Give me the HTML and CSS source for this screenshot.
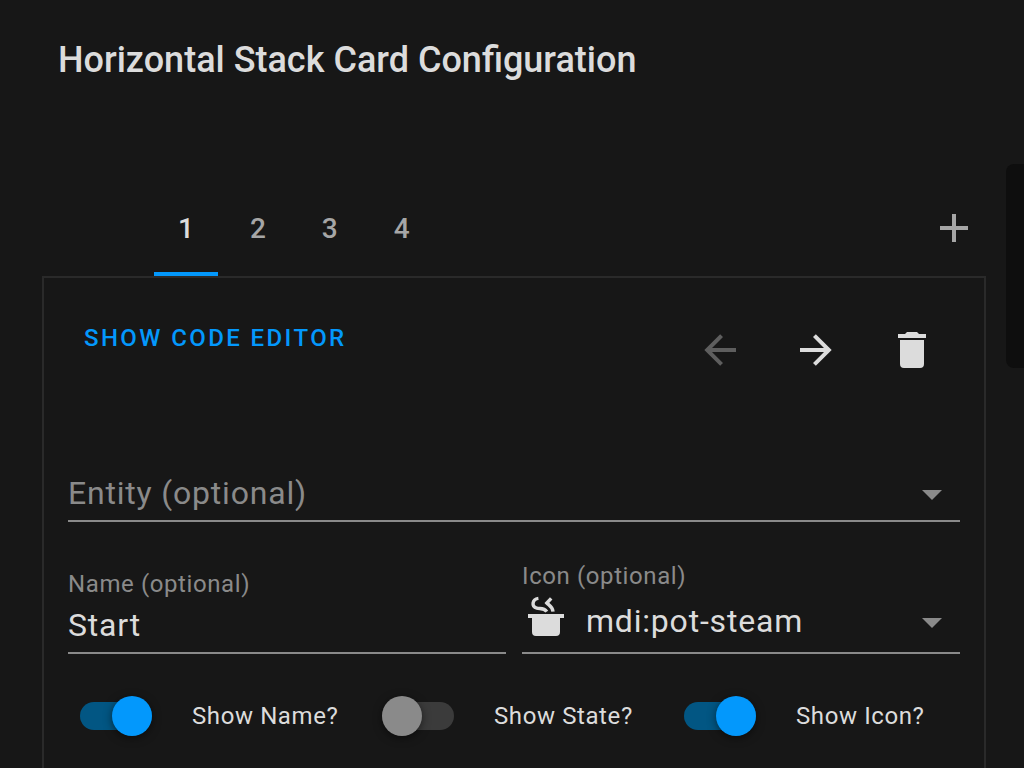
FILE: index.html
```html
<!DOCTYPE html>
<html lang="en">
<head>
<meta charset="utf-8">
<title>Horizontal Stack Card Configuration</title>
<link rel="stylesheet" href="styles.css">
</head>
<body>
<main class="dialog">
  <section class="editor">
    <h1 class="title">Horizontal Stack Card Configuration</h1>
    <div class="tabbar">
      <div class="tabs" role="tablist">
        <button class="tab tab-active" role="tab" aria-selected="true">1</button>
        <button class="tab" role="tab" aria-selected="false">2</button>
        <button class="tab" role="tab" aria-selected="false">3</button>
        <button class="tab" role="tab" aria-selected="false">4</button>
      </div>
      <button class="add" aria-label="Add card">
        <svg class="icon" viewBox="0 0 24 24"><path d="M19,13H13V19H11V13H5V11H11V5H13V11H19V13Z"/></svg>
      </button>
    </div>
    <form class="panel">
      <div class="toolbar">
        <button class="code-button" type="button">SHOW CODE EDITOR</button>
        <div class="actions">
          <button class="icon-button" type="button" aria-label="Move before" disabled>
            <svg class="icon" viewBox="0 0 24 24"><path d="M20,11V13H8L13.5,18.5L12.08,19.92L4.16,12L12.08,4.08L13.5,5.5L8,11H20Z"/></svg>
          </button>
          <button class="icon-button" type="button" aria-label="Move after">
            <svg class="icon" viewBox="0 0 24 24"><path d="M4,11V13H16L10.5,18.5L11.92,19.92L19.84,12L11.92,4.08L10.5,5.5L16,11H4Z"/></svg>
          </button>
          <button class="icon-button" type="button" aria-label="Delete card">
            <svg class="icon" viewBox="0 0 24 24"><path d="M19,4H15.5L14.5,3H9.5L8.5,4H5V6H19M6,19A2,2 0 0,0 8,21H16A2,2 0 0,0 18,19V7H6V19Z"/></svg>
          </button>
        </div>
      </div>
      <div class="field entity">
        <div class="control">
          <select class="value select placeholder" aria-label="Entity">
            <option>Entity (optional)</option>
          </select>
          <svg class="icon caret" viewBox="0 0 24 24"><path d="M7,10L12,15L17,10H7Z"/></svg>
        </div>
      </div>
      <div class="row">
        <div class="field">
          <label class="label" for="name">Name (optional)</label>
          <div class="control name-control">
            <input class="value" id="name" type="text" value="Start">
          </div>
        </div>
        <div class="field">
          <label class="label" for="icon">Icon (optional)</label>
          <div class="control icon-control">
            <svg class="icon pot" viewBox="0 0 24 24">
              <path d="M3,10H21V12H19V19A2,2 0 0,1 17,21H7A2,2 0 0,1 5,19V12H3Z"/>
              <path class="steam" d="M8.2,2.2C5,2.6 4.6,6.4 7.4,7.1C9,7.5 11,6.8 12.4,8.8M14.6,2.2L12.4,4.5C13.4,5.6 15.4,6.4 15.5,8.8"/>
            </svg>
            <select class="value select" id="icon">
              <option>mdi:pot-steam</option>
            </select>
            <svg class="icon caret" viewBox="0 0 24 24"><path d="M7,10L12,15L17,10H7Z"/></svg>
          </div>
        </div>
      </div>
      <div class="switches">
        <label class="switch"><input class="toggle" type="checkbox" checked>Show Name?</label>
        <label class="switch"><input class="toggle" type="checkbox">Show State?</label>
        <label class="switch"><input class="toggle" type="checkbox" checked>Show Icon?</label>
      </div>
    </form>
  </section>
  <aside class="preview"></aside>
</main>
</body>
</html>
```

FILE: styles.css
```css
* {
  box-sizing: border-box;
}

body {
  margin: 0;
  background: #171717;
  color: #dcdcdc;
  font-family: Roboto, "Liberation Sans", sans-serif;
}

button,
input,
select {
  margin: 0;
  padding: 0;
  border: 0;
  background: none;
  color: inherit;
  font: inherit;
  letter-spacing: inherit;
}

.dialog {
  display: flex;
  gap: 20px;
  min-height: 100vh;
}

.editor {
  display: flex;
  flex: 1;
  flex-direction: column;
  padding-left: 42px;
}

.preview {
  width: 18px;
  height: 204px;
  margin-top: 164px;
  border-radius: 8px 0 0 8px;
  background: #0e0e0e;
}

.title {
  margin: 0;
  padding: 36px 16px 96px;
  font-size: 36px;
  font-weight: 500;
  line-height: 48px;
}

.icon {
  display: block;
  flex: none;
  width: 48px;
  height: 48px;
  fill: currentColor;
}

.tabbar {
  display: flex;
  align-items: center;
  justify-content: space-between;
  padding: 0 8px 0 112px;
}

.tabs {
  display: flex;
  gap: 8px;
}

.tab {
  height: 96px;
  padding: 4px 24px 0;
  border-bottom: 4px solid transparent;
  color: #a6a6a6;
  font-size: 28px;
  font-weight: 500;
}

.tab-active {
  border-color: #0398fc;
  color: #dcdcdc;
}

.add {
  color: #a6a6a6;
}

.panel {
  flex: 1;
  padding: 24px 24px 16px;
  border: 2px solid #2a2a2a;
  border-bottom: 0;
}

.toolbar {
  display: flex;
  align-items: flex-start;
  justify-content: space-between;
}

.code-button {
  height: 72px;
  padding: 0 16px;
  color: #0398fc;
  font-size: 24px;
  font-weight: 500;
  letter-spacing: 0.1em;
}

.actions {
  display: flex;
}

.icon-button {
  padding: 24px;
}

.icon-button:disabled {
  color: #5e5e5e;
}

.field {
  display: flex;
  flex: 1;
  flex-direction: column;
  min-width: 0;
  border-bottom: 2px solid #8a8a8a;
}

.entity {
  margin-top: 70px;
}

.control {
  display: flex;
  align-items: center;
  height: 52px;
}

.value {
  flex: 1;
  min-width: 0;
  height: 48px;
  outline: 0;
  font-size: 32px;
  letter-spacing: 0.025em;
  appearance: none;
}

.select {
  padding-bottom: 2px;
}

.placeholder,
.label,
.caret {
  color: #8a8a8a;
}

.caret {
  margin-right: 4px;
}

.row {
  display: flex;
  align-items: flex-end;
  gap: 16px;
  margin-top: 40px;
}

.label {
  font-size: 24px;
  line-height: 28px;
  letter-spacing: 0.025em;
}

.name-control {
  height: 54px;
}

.icon-control {
  align-items: flex-end;
  gap: 16px;
  height: 62px;
  padding: 4px 0 6px;
}

.pot {
  align-self: flex-start;
}

.steam {
  fill: none;
  stroke: currentColor;
  stroke-width: 1.7;
}

.switches {
  display: grid;
  grid-template-columns: repeat(3, 1fr);
  gap: 14px;
  margin-top: 42px;
  padding-left: 12px;
  margin-right: -12px;
}

.switch {
  display: flex;
  align-items: center;
  gap: 40px;
  height: 40px;
  font-size: 24px;
  letter-spacing: 0.025em;
  white-space: nowrap;
}

.toggle {
  display: flex;
  align-items: center;
  width: 72px;
  height: 28px;
  border-radius: 14px;
  background: #3b3b3b;
  appearance: none;
}

.toggle::before {
  content: "";
  width: 40px;
  height: 40px;
  flex: none;
  border-radius: 50%;
  background: #8a8a8a;
  box-shadow: 0 2px 8px rgba(0, 0, 0, 0.5);
}

.toggle:checked {
  justify-content: flex-end;
  background: #025683;
}

.toggle:checked::before {
  background: #0398fc;
}
```
